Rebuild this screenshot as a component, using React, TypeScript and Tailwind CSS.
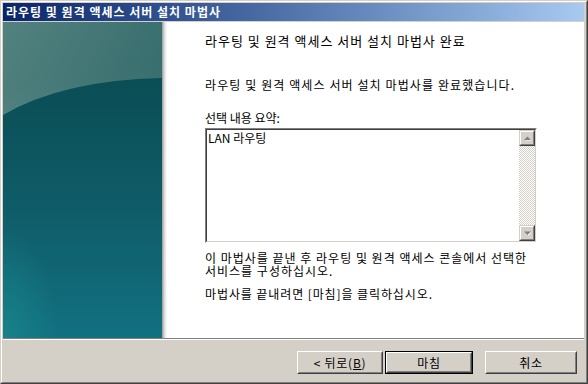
import React from "react";

function SidePanel() {
  return (
    <svg width="159" height="316" viewBox="0 0 159 316" className="block shrink-0">
      <defs>
        <linearGradient id="top" x1="0" y1="0" x2="1" y2="1">
          <stop offset="0" stopColor="#52827f" />
          <stop offset="1" stopColor="#255f62" />
        </linearGradient>
        <linearGradient id="low" x1="0" y1="0" x2="0" y2="1">
          <stop offset="0" stopColor="#0a4d55" />
          <stop offset="0.5" stopColor="#0f5c68" />
          <stop offset="1" stopColor="#127080" />
        </linearGradient>
        <radialGradient id="glow" cx="0" cy="1" r="0.35">
          <stop offset="0" stopColor="#1a8a8f" stopOpacity="0.7" />
          <stop offset="1" stopColor="#1a8a8f" stopOpacity="0" />
        </radialGradient>
        <linearGradient id="shine" x1="0" y1="0" x2="0" y2="1">
          <stop offset="0" stopColor="#3f7574" stopOpacity="0" />
          <stop offset="1" stopColor="#5a8c8a" stopOpacity="0.35" />
        </linearGradient>
      </defs>
      <rect width="159" height="316" fill="url(#top)" />
      <path d="M0,60 L159,40 L159,56 Q60,58 0,93 Z" fill="url(#shine)" />
      <path d="M0,93 Q60,58 159,56 L159,316 L0,316 Z" fill="url(#low)" />
      <rect width="159" height="316" fill="url(#glow)" />
    </svg>
  );
}

function Btn({
  children,
  w,
  def,
}: {
  children: React.ReactNode;
  w: string;
  def?: boolean;
}) {
  const inner = (
    <div className="h-full w-full border border-t-white border-l-white border-r-[#404040] border-b-[#404040]">
      <div className="h-full w-full border border-t-[#d4d0c8] border-l-[#d4d0c8] border-r-[#808080] border-b-[#808080] flex items-center justify-center bg-[#d4d0c8] leading-none tracking-[0.75px]">
        {children}
      </div>
    </div>
  );
  return (
    <div className={`${w} h-[23px] ${def ? "border border-black" : ""}`}>{inner}</div>
  );
}

function ArrowBtn({ up }: { up?: boolean }) {
  return (
    <div className="w-[16px] h-[16px] border border-t-[#d4d0c8] border-l-[#d4d0c8] border-r-[#404040] border-b-[#404040]">
      <div className="w-full h-full border border-t-white border-l-white border-r-[#808080] border-b-[#808080] bg-[#d4d0c8] flex items-center justify-center">
        <svg width="7" height="5" viewBox="0 0 7 5">
          {up ? (
            <>
              <path d="M1,4 L4,1 L7,4 Z" fill="#ffffff" transform="translate(0.5,0.5)" />
              <path d="M0,4 L3.5,0.5 L7,4 Z" fill="#808080" />
            </>
          ) : (
            <>
              <path d="M1,1 L4,4 L7,1 Z" fill="#ffffff" transform="translate(0.5,0.5)" />
              <path d="M0,0.5 L3.5,4 L7,0.5 Z" fill="#808080" />
            </>
          )}
        </svg>
      </div>
    </div>
  );
}

export default function App() {
  return (
    <div className="w-[588px] h-[384px] bg-[#d4d0c8] border border-t-[#d4d0c8] border-l-[#d4d0c8] border-r-[#404040] border-b-[#404040] font-['Noto_Sans_CJK_KR','Noto_Sans',sans-serif] text-[12px] text-black overflow-hidden">
      <div className="w-full h-full border border-t-white border-l-white border-r-[#808080] border-b-[#808080] pt-px pl-px pr-[2px] pb-[2px] flex flex-col">
        <div className="h-[18px] shrink-0 bg-gradient-to-r from-[#0a246a] to-[#a6caf0] flex items-center pl-[3px] text-white font-bold text-[12px] leading-none tracking-[1px]">
          라우팅 및 원격 액세스 서버 설치 마법사
        </div>
        <div className="h-px shrink-0" />
        <div className="flex h-[316px] shrink-0 bg-white">
          <SidePanel />
          <div className="w-[5px] shrink-0 bg-gradient-to-r from-[#9a9a9a] via-[#dcdcdc] to-white" />
          <div className="pl-[38px] flex flex-col whitespace-nowrap">
            <div className="mt-[11px] text-[13px] leading-[16px] tracking-[1px]">
              라우팅 및 원격 액세스 서버 설치 마법사 완료
            </div>
            <div className="mt-[28px] leading-[16px] tracking-[1.1px]">
              라우팅 및 원격 액세스 서버 설치 마법사를 완료했습니다.
            </div>
            <div className="mt-[17px] leading-[16px]">선택 내용 요약:</div>
            <div className="mt-[2px] w-[332px] h-[115px] border border-t-[#808080] border-l-[#808080] border-r-white border-b-white">
              <div className="w-full h-full border border-t-[#404040] border-l-[#404040] border-r-[#d4d0c8] border-b-[#d4d0c8] flex bg-white">
                <div className="flex-1 pl-px pt-px leading-[14px]">LAN 라우팅</div>
                <div className="w-[16px] flex flex-col">
                  <ArrowBtn up />
                  <div className="flex-1 bg-[repeating-conic-gradient(#d4d0c8_0_25%,#ffffff_0_50%)] bg-[length:2px_2px]" />
                  <ArrowBtn />
                </div>
              </div>
            </div>
            <div className="mt-[8px] leading-[13px] tracking-[1px]">
              이 마법사를 끝낸 후 라우팅 및 원격 액세스 콘솔에서 선택한
              <br />
              서비스를 구성하십시오.
            </div>
            <div className="mt-[10px] leading-[13px] tracking-[0.9px]">
              마법사를 끝내려면 [마침]을 클릭하십시오.
            </div>
          </div>
        </div>
        <div className="h-px shrink-0 bg-[#808080]" />
        <div className="h-px shrink-0 bg-white" />
        <div className="flex-1 flex items-start justify-end pt-[11px] pr-[7px]">
          <Btn w="w-[86px]">
            &lt; 뒤로(<span className="underline">B</span>)
          </Btn>
          <div className="w-[2px]" />
          <Btn w="w-[88px]" def>
            마침
          </Btn>
          <div className="w-[12px]" />
          <Btn w="w-[92px]">취소</Btn>
        </div>
      </div>
    </div>
  );
}
